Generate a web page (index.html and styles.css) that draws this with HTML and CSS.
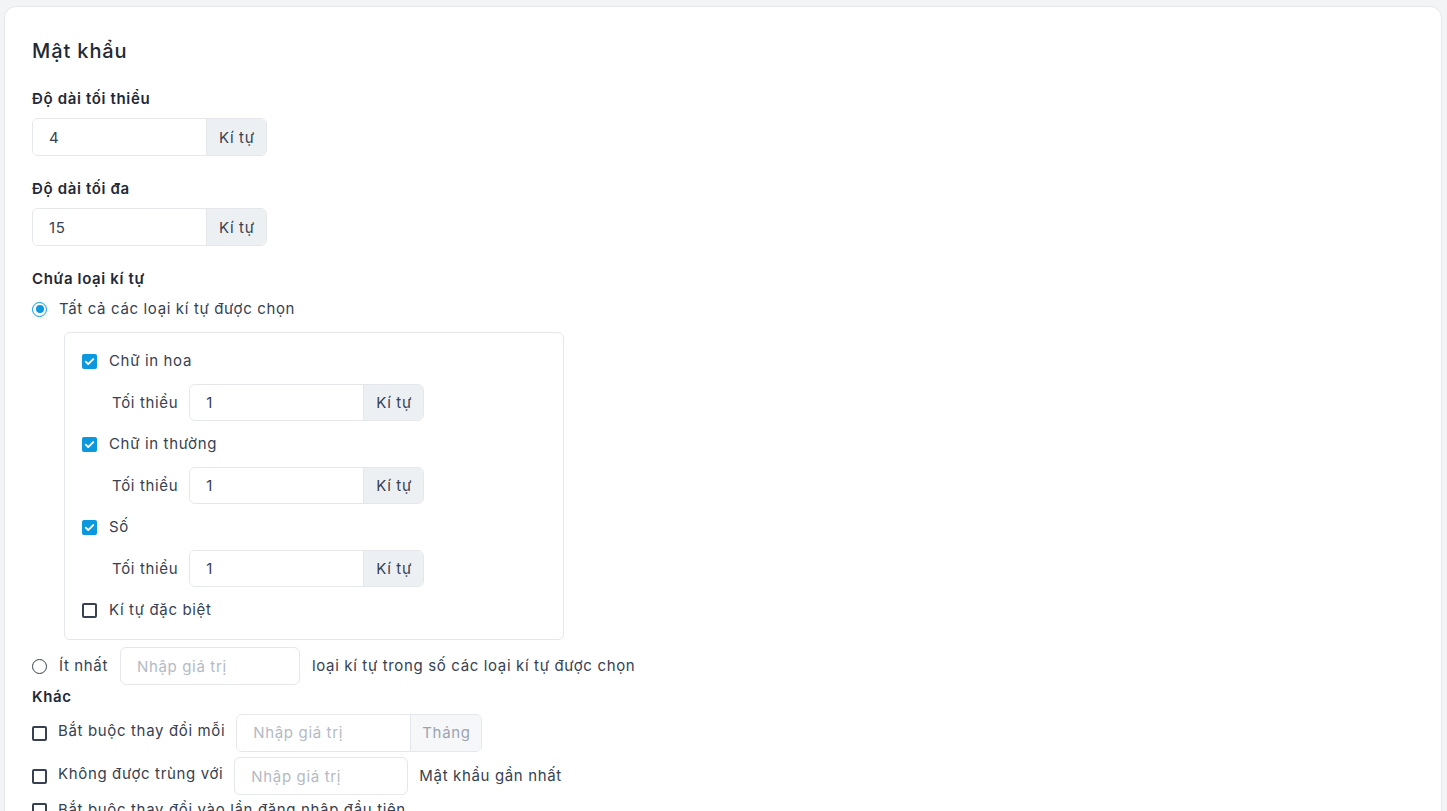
FILE: index.html
```html
<!DOCTYPE html>
<html lang="vi">

<head>
  <meta charset="UTF-8" />
  <meta name="viewport" content="width=device-width, initial-scale=1.0" />
  <title>Mật khẩu</title>
  <link rel="stylesheet" href="styles.css">
</head>

<body>
  <div class="card">
    <h1 class="title">Mật khẩu</h1>

    <div class="field">
      <div class="label">Độ dài tối thiểu</div>
      <div class="input-group">
        <input type="text" value="4" />
        <span class="addon">Kí tự</span>
      </div>
    </div>

    <div class="field">
      <div class="label">Độ dài tối đa</div>
      <div class="input-group">
        <input type="text" value="15" />
        <span class="addon">Kí tự</span>
      </div>
    </div>

    <div class="field types">
      <div class="label">Chứa loại kí tự</div>
      <div class="check-row">
        <span class="radio checked"></span>
        <span>Tất cả các loại kí tự được chọn</span>
      </div>

      <div class="type-box">
        <div class="check-row">
          <span class="checkbox checked"><svg viewBox="0 0 16 16"><path d="M4 8.2l2.6 2.6L12 5.4" /></svg></span>
          <span>Chữ in hoa</span>
        </div>
        <div class="min-row">
          <span>Tối thiểu</span>
          <div class="input-group">
            <input type="text" value="1" />
            <span class="addon">Kí tự</span>
          </div>
        </div>
        <div class="check-row">
          <span class="checkbox checked"><svg viewBox="0 0 16 16"><path d="M4 8.2l2.6 2.6L12 5.4" /></svg></span>
          <span>Chữ in thường</span>
        </div>
        <div class="min-row">
          <span>Tối thiểu</span>
          <div class="input-group">
            <input type="text" value="1" />
            <span class="addon">Kí tự</span>
          </div>
        </div>
        <div class="check-row">
          <span class="checkbox checked"><svg viewBox="0 0 16 16"><path d="M4 8.2l2.6 2.6L12 5.4" /></svg></span>
          <span>Số</span>
        </div>
        <div class="min-row">
          <span>Tối thiểu</span>
          <div class="input-group">
            <input type="text" value="1" />
            <span class="addon">Kí tự</span>
          </div>
        </div>
        <div class="check-row">
          <span class="checkbox"></span>
          <span>Kí tự đặc biệt</span>
        </div>
      </div>

      <div class="inline-row atleast">
        <span class="radio"></span>
        <span>Ít nhất</span>
        <input type="text" class="plain" placeholder="Nhập giá trị" />
        <span>loại kí tự trong số các loại kí tự được chọn</span>
      </div>
    </div>

    <div class="field other">
      <div class="label">Khác</div>
      <div class="inline-row">
        <span class="checkbox"></span>
        <span class="text-up">Bắt buộc thay đổi mỗi</span>
        <div class="input-group">
          <input type="text" placeholder="Nhập giá trị" />
          <span class="addon muted">Tháng</span>
        </div>
      </div>
      <div class="inline-row">
        <span class="checkbox"></span>
        <span class="text-up">Không được trùng với</span>
        <input type="text" class="plain short" placeholder="Nhập giá trị" />
        <span>Mật khẩu gần nhất</span>
      </div>
      <div class="inline-row">
        <span class="checkbox"></span>
        <span>Bắt buộc thay đổi vào lần đăng nhập đầu tiên</span>
      </div>
    </div>
  </div>
</body>

</html>
```

FILE: styles.css
```css
* {
  box-sizing: border-box;
}

body {
  margin: 0;
  padding: 6px 5px 0 4px;
  background: #f3f4f6;
  font-family: Inter, "Noto Sans", sans-serif;
  font-size: 15px;
  letter-spacing: 0.65px;
  color: #374151;
  overflow: hidden;
  height: 811px;
}

.card {
  background: #fff;
  border: 1px solid #e5e7eb;
  border-radius: 12px;
  padding: 26px 27px 40px;
  min-height: 900px;
}

.title {
  margin: 0 0 20px;
  font-size: 20px;
  font-weight: 500;
  letter-spacing: 0.9px;
  line-height: 36px;
  color: #1f2937;
}

.field {
  margin-bottom: 23px;
}

.label {
  font-weight: 600;
  line-height: 20px;
  color: #1f2937;
  margin-bottom: 9px;
}

.input-group {
  display: flex;
  width: max-content;
  height: 38px;
  border: 1px solid #e5e7eb;
  border-radius: 6px;
  overflow: hidden;
}

.input-group input {
  width: 173px;
  border: none;
  padding: 0 16px;
  font: inherit;
  letter-spacing: inherit;
  color: #374151;
  outline: none;
}

input::placeholder {
  color: #b4bac3;
}

.addon {
  display: flex;
  align-items: center;
  padding: 0 11px 0 12px;
  background: #edf0f3;
  color: #374151;
  border-left: 1px solid #e5e7eb;
}

.addon.muted {
  background: #f5f7f9;
  color: #9ca3af;
  padding: 0 10px 0 11px;
}

.check-row {
  display: flex;
  align-items: center;
  gap: 12px;
  line-height: 20px;
}

.types .label {
  margin-bottom: 10px;
}

.types {
  margin-bottom: 2px;
}

.radio {
  width: 15px;
  height: 15px;
  border: 1.5px solid #374151;
  border-radius: 50%;
  flex-shrink: 0;
  display: flex;
  align-items: center;
  justify-content: center;
}

.radio.checked {
  border: 1.5px solid #0b98de;
}

.radio.checked::after {
  content: "";
  width: 8px;
  height: 8px;
  border-radius: 50%;
  background: #0b98de;
}

.checkbox {
  width: 15px;
  height: 15px;
  border: 2px solid #374151;
  border-radius: 2px;
  flex-shrink: 0;
  display: flex;
}

.checkbox.checked {
  border: none;
  background: #0b98de;
}

.checkbox svg {
  width: 15px;
  height: 15px;
  fill: none;
  stroke: #fff;
  stroke-width: 2;
  stroke-linecap: round;
  stroke-linejoin: round;
}

.type-box {
  width: 500px;
  margin: 13px 0 7px 32px;
  border: 1px solid #e5e7eb;
  border-radius: 6px;
  padding: 18px 17px 19px;
  display: flex;
  flex-direction: column;
  gap: 13px;
}

.min-row {
  display: flex;
  align-items: center;
  gap: 11px;
  padding-left: 30px;
}

.min-row .input-group {
  height: 37px;
}

.inline-row {
  display: flex;
  align-items: center;
  gap: 12px;
  line-height: 20px;
}

.other .inline-row {
  gap: 11px;
}

input.plain {
  width: 180px;
  height: 38px;
  border: 1px solid #e5e7eb;
  border-radius: 6px;
  padding: 0 16px;
  font: inherit;
  letter-spacing: inherit;
  color: #374151;
  outline: none;
}

input.plain.short {
  width: 174px;
}

.other {
  display: flex;
  flex-direction: column;
  gap: 5px;
}

.other .label {
  margin-bottom: 2px;
}

.text-up {
  position: relative;
  top: -2px;
}
```
